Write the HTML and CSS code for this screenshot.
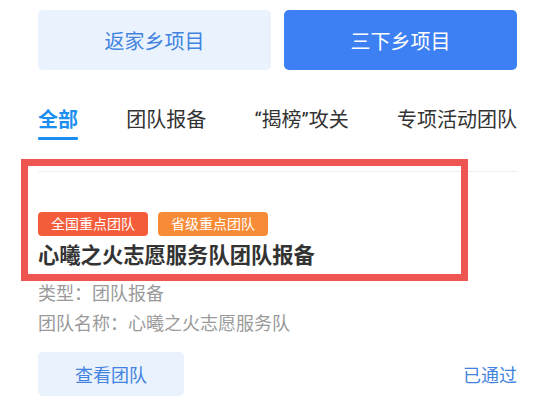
FILE: index.html
```html
<!DOCTYPE html>
<html lang="zh-CN">
<head>
<meta charset="utf-8">
<link rel="stylesheet" href="styles.css">
</head>
<body>
<div class="page">
  <div class="switch">
    <div class="switch-btn light">返家乡项目</div>
    <div class="switch-btn solid">三下乡项目</div>
  </div>
  <div class="tabs">
    <div class="tab active">全部</div>
    <div class="tab">团队报备</div>
    <div class="tab">“揭榜”攻关</div>
    <div class="tab">专项活动团队</div>
  </div>
  <div class="card">
    <div class="tags">
      <span class="tag red">全国重点团队</span>
      <span class="tag orange">省级重点团队</span>
    </div>
    <div class="title">心曦之火志愿服务队团队报备</div>
    <div class="info">类型：团队报备</div>
    <div class="info">团队名称：心曦之火志愿服务队</div>
    <div class="actions">
      <div class="view-btn">查看团队</div>
      <div class="status">已通过</div>
    </div>
    <div class="highlight"></div>
  </div>
</div>
</body>
</html>
```

FILE: styles.css
```css
* { box-sizing: border-box; }
html, body { margin: 0; padding: 0; background: #fff; }
body {
  font-family: Roboto, "Noto Sans CJK SC", sans-serif;
  color: #333;
}
.page {
  padding: 10px 37px 0 38px;
  position: relative;
}
.switch {
  display: grid;
  grid-template-columns: 1fr 1fr;
  gap: 13px;
}
.switch-btn {
  height: 60px;
  border-radius: 5px;
  display: flex;
  align-items: center;
  justify-content: center;
  font-size: 20px;
}
.switch-btn.light { background: #eaf3fd; color: #4283e0; }
.switch-btn.solid { background: #3d80f3; color: #fff; }

.tabs {
  display: flex;
  justify-content: space-between;
  margin-top: 36px;
}
.tab {
  font-size: 20px;
  line-height: 28px;
  padding-bottom: 6px;
  color: #333;
  position: relative;
}
.tab.active {
  color: #1b8ef0;
  font-weight: 700;
}
.tab.active::after {
  content: "";
  position: absolute;
  left: 0;
  right: 0;
  bottom: 0;
  height: 3px;
  background: #1b8ef0;
  border-radius: 1px;
}

.card {
  margin-top: 31px;
  border-top: 1px solid #eeeeee;
  padding-top: 40px;
  position: relative;
}
.tags {
  display: flex;
  gap: 10px;
}
.tag {
  height: 24px;
  line-height: 24px;
  padding: 0 13px;
  border-radius: 4px;
  font-size: 14px;
  color: #fff;
}
.tag.red { background: #f45d3c; }
.tag.orange { background: #f88b37; }
.title {
  margin-top: 5px;
  font-size: 21.3px;
  line-height: 30px;
  font-weight: 700;
  color: #333;
}
.info {
  font-size: 18px;
  line-height: 30px;
  color: #9a9a9a;
}
.title + .info { margin-top: 8px; }
.actions {
  margin-top: 13px;
  display: flex;
  justify-content: space-between;
  align-items: center;
}
.view-btn {
  width: 146px;
  height: 44px;
  border-radius: 5px;
  background: #e9f2fd;
  color: #4283e0;
  font-size: 18px;
  display: flex;
  align-items: center;
  justify-content: center;
}
.status {
  font-size: 18px;
  color: #4283e0;
}
.highlight {
  position: absolute;
  left: -17px;
  top: -13px;
  width: 447px;
  height: 122px;
  border: 7px solid #ef5551;
  pointer-events: none;
}
```
